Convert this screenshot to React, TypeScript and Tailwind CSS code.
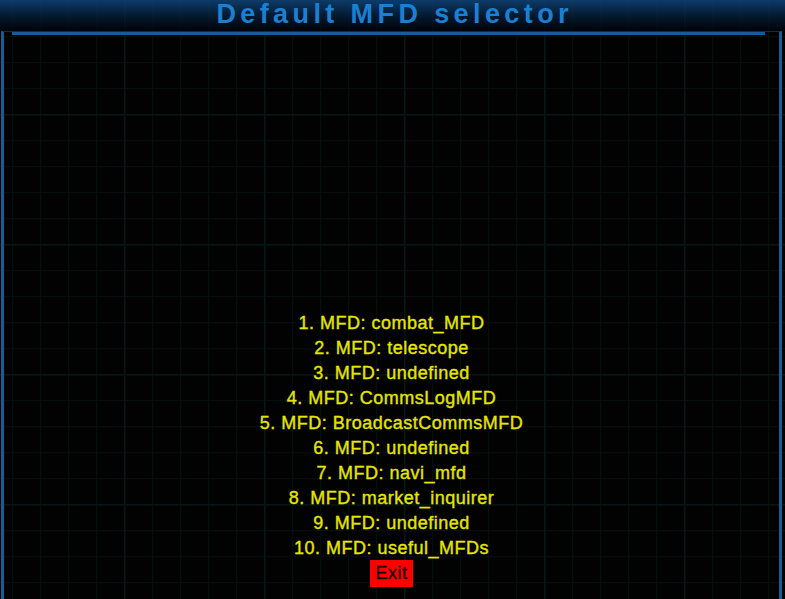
import React from "react";

const slots = [
  "combat_MFD",
  "telescope",
  "undefined",
  "CommsLogMFD",
  "BroadcastCommsMFD",
  "undefined",
  "navi_mfd",
  "market_inquirer",
  "undefined",
  "useful_MFDs",
];

function GridBackdrop() {
  return (
    <svg className="absolute inset-0 h-full w-full" width="785" height="599">
      <defs>
        <pattern id="fine" x="12" y="10" width="28" height="26" patternUnits="userSpaceOnUse">
          <rect x="0" y="0" width="1.2" height="26" fill="#050d0d" />
          <rect x="0" y="0" width="28" height="1.2" fill="#050d0d" />
        </pattern>
        <pattern id="major" x="124" y="114" width="140" height="130" patternUnits="userSpaceOnUse">
          <rect x="0" y="0" width="1.6" height="130" fill="#081515" />
          <rect x="0" y="0" width="140" height="1.6" fill="#081515" />
        </pattern>
      </defs>
      <rect width="785" height="599" fill="url(#fine)" />
      <rect width="785" height="599" fill="url(#major)" />
    </svg>
  );
}

export default function App() {
  return (
    <div
      className="relative h-[599px] w-[785px] overflow-hidden bg-[#020202]"
      style={{ fontFamily: '"Liberation Sans", Arial, sans-serif' }}
    >
      <GridBackdrop />
      <div className="relative flex h-full flex-col">
        <header className="flex h-[31px] shrink-0 justify-center bg-[linear-gradient(to_bottom,rgba(14,64,114,0.92),rgba(6,34,64,0.75)_50%,rgba(0,4,10,0.7))]">
          <h1 className="pl-[4.4px] text-[27px] font-bold leading-[28px] tracking-[4.4px] text-[#1b80d2]">
            Default MFD selector
          </h1>
        </header>
        <main className="ml-[1px] mr-[3px] flex flex-1 flex-col border-x-[3px] border-t border-x-[#1b5b93] border-t-[#142a40]">
          <div className="ml-[8px] mr-[14px] h-[3px] bg-[#1b5b93]" />
          <div className="flex flex-1 flex-col items-center justify-end pb-[12px] text-[18px] tracking-[0.5px] text-[#e6e600] [-webkit-text-stroke:0.35px_#e6e600]">
            {slots.map((name, i) => (
              <div key={i} className="leading-[25px]">
                {i + 1}. MFD: {name}
              </div>
            ))}
            <div className="mt-[-1px] bg-[#ff0000] px-[5px] leading-[27px] text-[#1a0000] [-webkit-text-stroke:0.35px_#1a0000]">
              Exit
            </div>
          </div>
        </main>
      </div>
    </div>
  );
}
